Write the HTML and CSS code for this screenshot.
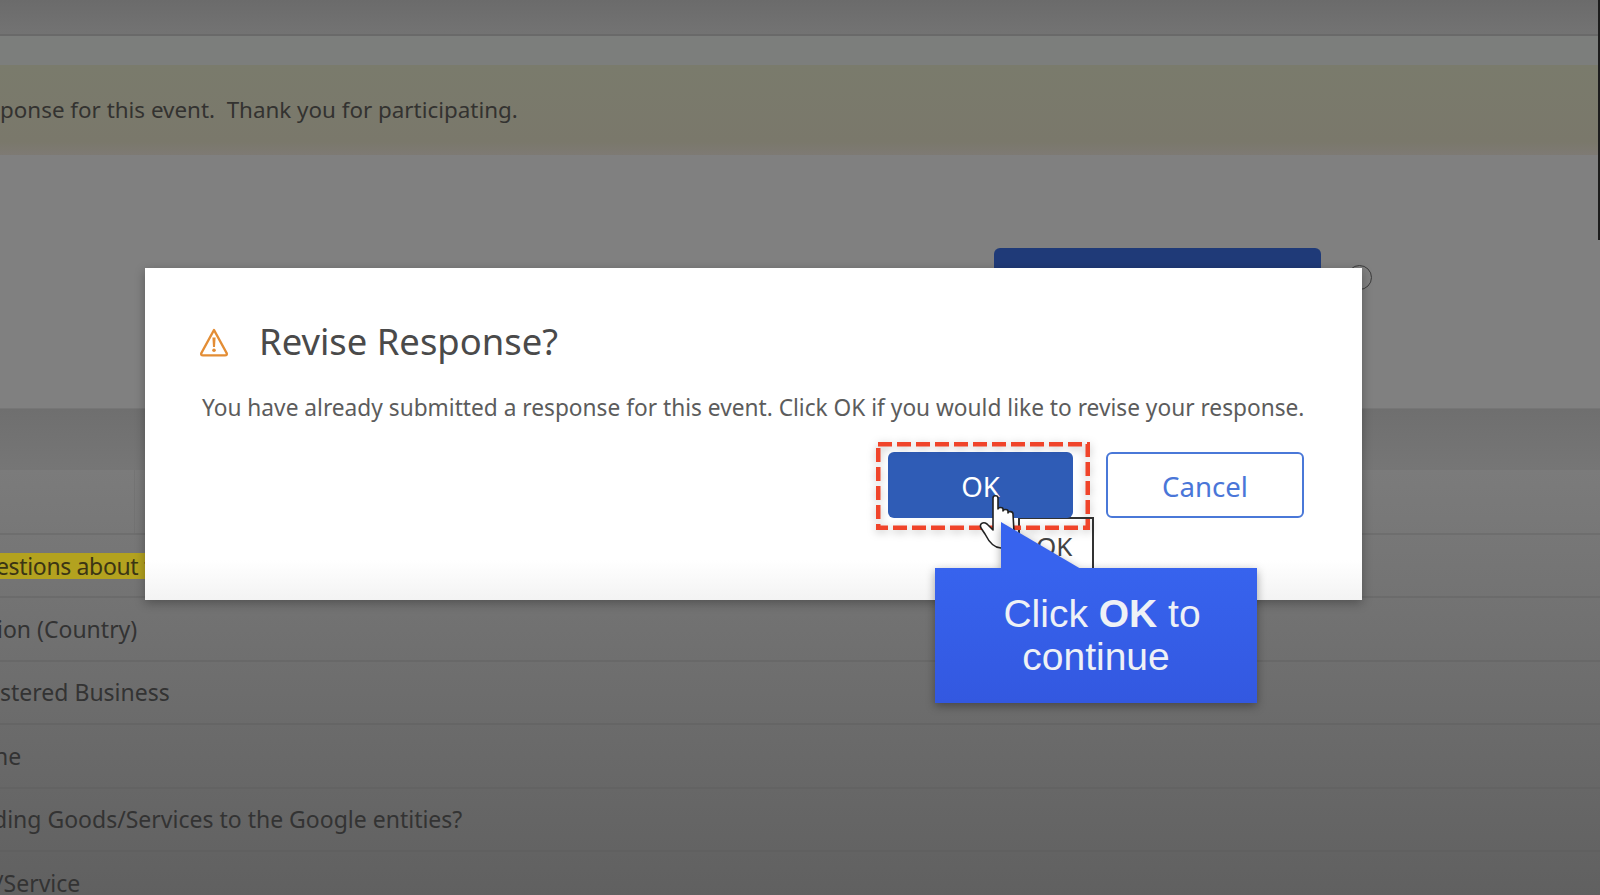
FILE: index.html
```html
<!DOCTYPE html>
<html lang="en">
<head>
<meta charset="utf-8">
<title>Revise Response?</title>
<link rel="stylesheet" href="styles.css">
</head>
<body>
<div class="page">
  <div class="topbar"></div>
  <div class="gap"></div>
  <div class="notice">ponse for this event.&nbsp; Thank you for participating.</div>
  <div class="actions-band">
    <div class="back-btn"></div>
    <div class="back-info"></div>
  </div>
  <div class="table-head"></div>
  <div class="rows">
    <div class="row row-first"><div class="cell"></div></div>
    <div class="row"><span class="hl"><span class="hl-text">estions about t</span></span></div>
    <div class="row"><span class="clip-s">ion (Country)</span></div>
    <div class="row">stered Business</div>
    <div class="row"><span class="clip-n">ne</span></div>
    <div class="row"><span class="clip-d">ding Goods/Services to the Google entities?</span></div>
    <div class="row"><span class="slash">/Service</span></div>
  </div>

  <div class="edge-bar"></div>

  <section class="dialog">
    <header class="dialog-head">
      <svg class="warn" viewBox="0 0 28 29" aria-hidden="true">
        <path d="M14 2 L26.6 25 Q27.4 27.4 25 27.4 L3 27.4 Q0.6 27.4 1.4 25 Z" fill="none" stroke="#e38d35" stroke-width="2.4" stroke-linejoin="round"/>
        <path d="M12.4 9.5 h3.2 l-.6 9.5 h-2 Z" fill="#e38d35"/>
        <circle cx="14" cy="22.3" r="1.8" fill="#e38d35"/>
      </svg>
      <h1 class="title">Revise Response?</h1>
    </header>
    <p class="message">You have already submitted a response for this event. Click OK if you would like to revise your response.</p>
    <div class="buttons">
      <div class="ok-wrap">
        <div class="tooltip">OK</div>
        <button class="btn btn-ok">OK</button>
        <svg class="dashes" viewBox="0 0 214 88" aria-hidden="true">
          <rect x="2" y="2" width="210" height="84" fill="none" stroke="#f0442a" stroke-width="5" stroke-dasharray="14 5"/>
        </svg>
        <svg class="hand" viewBox="0 0 50 60" aria-hidden="true">
          <path d="M18 6 C18 3 23 3 23 6 L23 17 C23 15 28 15 28 17 L28 19 C28 17 33 17 33 19 L33 21 C33 19 38 19 38 22 L39 40 C39 50 34 56 26 56 C20 56 14 50 10 42 L6 36 C4 32 8 29 12 32 L18 38 Z" fill="#fff" stroke="#222" stroke-width="1.6" stroke-linejoin="round"/>
        </svg>
      </div>
      <button class="btn btn-cancel">Cancel</button>
    </div>
  </section>

  <aside class="callout">
    <div class="callout-line first">Click <b>OK</b> to</div>
    <div class="callout-line">continue</div>
  </aside>
</div>
</body>
</html>
```
FILE: styles.css
```css
* { box-sizing: border-box; }
html, body { margin: 0; padding: 0; }
body { background: #7f7f7f; font-family: "Noto Sans", "Open Sans", sans-serif; }
.page { position: relative; width: 1600px; height: 895px; overflow: hidden; display: flex; flex-direction: column; background: #808080; color: #353535; }

.topbar { flex: 0 0 36px; background: linear-gradient(#6b6b6b, #737373); border-bottom: 2px solid #696969; }
.gap { flex: 0 0 29px; background: #7c7e7c; }
.notice { flex: 0 0 90px; display: flex; align-items: center; padding-bottom: 1px; font-size: 22.4px; color: #333230; white-space: pre; background: linear-gradient(#7a7b6c, #7a786b 85%, #7e7a74); }
.actions-band { flex: 0 0 253px; position: relative; background: #808080; }
.back-btn { position: absolute; left: 994px; top: 93px; width: 327px; height: 40px; background: #1f3a78; border-radius: 6px 6px 0 0; }
.back-info { position: absolute; left: 1347px; top: 110px; width: 25px; height: 25px; border: 1.5px solid #3c3c3c; border-radius: 50%; }
.table-head { flex: 0 0 62px; background: linear-gradient(#6f6f6f, #767676); border-top: 1px solid #767676; }

.rows { flex: 1; background: linear-gradient(#7b7b7b, #5f5f5f); }
.row { height: 63.4px; display: flex; align-items: center; font-size: 23px; color: #333; white-space: nowrap; border-bottom: 2px solid rgba(90, 90, 90, .3); }
.row-first { height: 65px; align-items: stretch; }
.cell { width: 135px; border-right: 1px solid rgba(100, 100, 100, .25); }
.hl { display: block; background: #b3a21f; color: #3b3514; height: 26px; line-height: 26px; width: 150px; overflow: hidden; }
.hl-text { display: block; margin-left: -4px; letter-spacing: -.35px; }
.clip-s { margin-left: -3px; }
.clip-d { margin-left: -7px; }
.slash { margin-left: -5px; }
.clip-n { margin-left: -6px; }

.edge-bar { position: absolute; right: 0; top: 0; width: 2px; height: 240px; background: #1c1c1c; }

.dialog { position: absolute; left: 145px; top: 268px; width: 1217px; height: 332px; padding: 49px 58px 0 55px; background: linear-gradient(#fff 88%, #f3f3f3); box-shadow: 0 3px 10px rgba(0, 0, 0, .3); }
.dialog-head { display: flex; align-items: center; gap: 31px; height: 48px; }
.warn { flex: none; width: 28px; height: 29px; margin-top: 2px; }
.title { margin: 0; font-size: 36.4px; font-weight: 400; color: #4a4a4a; line-height: 48px; }
.message { margin: 27px 0 0 2px; font-size: 22.7px; line-height: 32px; color: #5c5c5c; white-space: nowrap; }
.buttons { display: flex; justify-content: flex-end; gap: 33px; margin-top: 28px; }
.ok-wrap { position: relative; width: 185px; height: 66px; }
.btn { display: block; height: 66px; font-family: inherit; font-size: 27.6px; border-radius: 6px; padding: 2px 0 0; }
.btn-ok { position: relative; width: 185px; background: #2f5cb6; border: 0; color: #fff; }
.btn-cancel { width: 198px; background: #fff; border: 2px solid #4a78d8; color: #4a76d8; }
.dashes { position: absolute; left: -12px; top: -10px; width: 214px; height: 88px; filter: drop-shadow(0 2px 4px rgba(0, 0, 0, .25)); }
.hand { position: absolute; left: 87px; top: 40px; width: 50px; height: 60px; }
.tooltip { position: absolute; left: 130px; top: 65px; width: 76px; height: 52px; padding-left: 16px; background: #fff; border: 2px solid #333; border-bottom: 0; color: #444; font-size: 26px; line-height: 54px; }

.callout { position: absolute; left: 935px; top: 568px; width: 322px; height: 135px; padding-top: 24px; background: linear-gradient(#3763ee, #3358e0); color: #eef1f6; font-family: "Liberation Sans", Arial, sans-serif; font-size: 39px; line-height: 43px; text-align: center; filter: drop-shadow(0 3px 5px rgba(0, 0, 0, .35)); }
.callout::before { content: ""; position: absolute; left: 66px; top: -46px; width: 80px; height: 47px; background: #3763ee; clip-path: polygon(0 0, 100% 100%, 0 100%); }
.callout-line.first { padding-left: 12px; }
```
